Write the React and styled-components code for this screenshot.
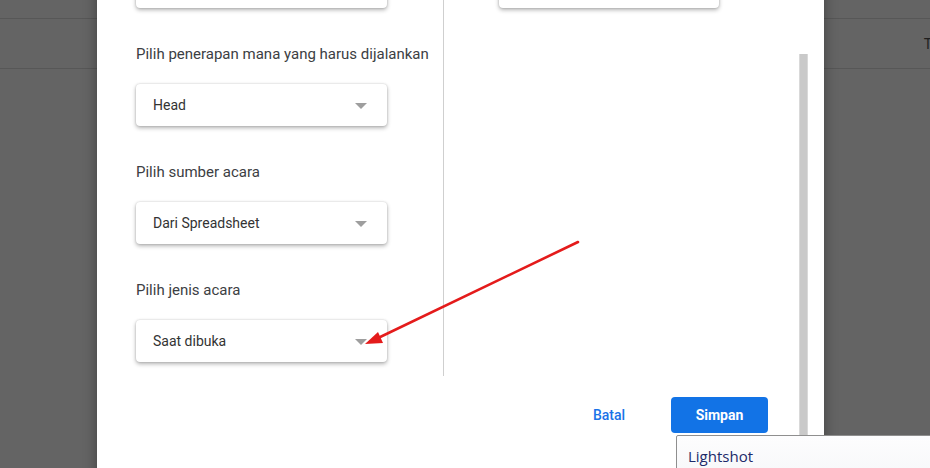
import React from "react";
import styled, { createGlobalStyle } from "styled-components";

const Global = createGlobalStyle`
  html, body {
    margin: 0;
    padding: 0;
    background: #646464;
    overflow: hidden;
  }
  #root {
    position: relative;
    width: 930px;
    height: 468px;
    overflow: hidden;
    font-family: Roboto, "Noto Sans", Arial, sans-serif;
  }
`;

const TopStrip = styled.div`
  height: 18px;
  border-bottom: 1px solid #575757;
`;

const Toolbar = styled.div`
  height: 49px;
  border-bottom: 1px solid #575757;
  display: flex;
  align-items: center;
  justify-content: flex-end;
  overflow: hidden;
`;

const ToolbarText = styled.span`
  font-size: 14px;
  color: #1e1e1e;
  margin-right: -2px;
  white-space: nowrap;
`;

const Modal = styled.div`
  position: absolute;
  left: 97px;
  top: -60px;
  width: 727px;
  height: 545px;
  background: #fff;
  border-radius: 8px;
  box-shadow: 0 0 14px rgba(0, 0, 0, 0.35);
  display: flex;
`;

const Main = styled.div`
  flex: 1;
  display: flex;
  flex-direction: column;
`;

const Body = styled.div`
  display: flex;
  padding-left: 39px;
`;

const Column = styled.div`
  display: flex;
  flex-direction: column;
  width: ${(p) => p.$width}px;
  padding-top: 26px;
  padding-left: ${(p) => p.$inset || 0}px;
  padding-bottom: 14px;
`;

const Divider = styled.div`
  width: 1px;
  background: #cfcfcf;
`;

const Field = styled.div`
  display: flex;
  flex-direction: column;
  margin-top: 36px;
`;

const Label = styled.div`
  font-size: 15px;
  line-height: 20px;
  color: #3c4043;
  margin-bottom: 20px;
  white-space: nowrap;
`;

const SelectBox = styled.div`
  box-sizing: border-box;
  width: ${(p) => p.$width}px;
  height: 42px;
  padding: 0 20px 0 17px;
  display: flex;
  align-items: center;
  justify-content: space-between;
  background: #fff;
  border-radius: 4px;
  box-shadow: 0 2px 4px rgba(0, 0, 0, 0.3), 0 0 2px rgba(0, 0, 0, 0.18);
  font-size: 14px;
  color: #333;
`;

const Caret = styled.span`
  width: 0;
  height: 0;
  border-left: 6px solid transparent;
  border-right: 6px solid transparent;
  border-top: 6px solid #9e9e9e;
  margin-top: 2px;
`;

const Footer = styled.div`
  display: flex;
  justify-content: flex-end;
  align-items: center;
  gap: 28px;
  padding-top: 21px;
  padding-right: 31px;
`;

const TextButton = styled.button`
  width: 68px;
  height: 36px;
  border: none;
  background: none;
  font-family: Roboto, Arial, sans-serif;
  font-weight: 500;
  font-size: 14px;
  color: #1a73e8;
  padding: 0;
`;

const PrimaryButton = styled.button`
  width: 97px;
  height: 36px;
  border: none;
  border-radius: 4px;
  background: #1273e6;
  color: #fff;
  font-family: Roboto, Arial, sans-serif;
  font-weight: 700;
  font-size: 14px;
  padding: 0;
`;

const ScrollThumb = styled.div`
  box-sizing: border-box;
  width: 9px;
  margin: 114px 16px 0 0;
  background: #c9c9c9;
  border-left: 1px solid #d9d9d9;
  border-right: 1px solid #d9d9d9;
`;

const Popup = styled.div`
  position: absolute;
  left: 676px;
  top: 435px;
  width: 300px;
  height: 60px;
  box-sizing: border-box;
  border: 1px solid #8f8f8f;
  border-radius: 2px;
  background: linear-gradient(#fdfdfe, #f4f5f7);
  padding: 10px 11px;
  font-family: "Open Sans", "Noto Sans", sans-serif;
  font-size: 15px;
  line-height: 20px;
  color: #1c2a6a;
`;

const Overlay = styled.svg`
  position: absolute;
  left: 0;
  top: 0;
  pointer-events: none;
`;

const Select = ({ value, width }) => (
  <SelectBox $width={width}>
    <span>{value}</span>
    {value !== undefined && <Caret />}
  </SelectBox>
);

const fields = [
  { label: "Pilih penerapan mana yang harus dijalankan", value: "Head" },
  { label: "Pilih sumber acara", value: "Dari Spreadsheet" },
  { label: "Pilih jenis acara", value: "Saat dibuka" },
];

export default function App() {
  return (
    <>
      <Global />
      <TopStrip />
      <Toolbar>
        <ToolbarText>T</ToolbarText>
      </Toolbar>
      <Modal>
        <Main>
          <Body>
            <Column $width={307}>
              <SelectBox $width={251} />
              {fields.map((f) => (
                <Field key={f.label}>
                  <Label>{f.label}</Label>
                  <Select value={f.value} width={251} />
                </Field>
              ))}
            </Column>
            <Divider />
            <Column $width={300} $inset={55}>
              <SelectBox $width={220} />
            </Column>
          </Body>
          <Footer>
            <TextButton>Batal</TextButton>
            <PrimaryButton>Simpan</PrimaryButton>
          </Footer>
        </Main>
        <ScrollThumb />
      </Modal>
      <Popup>Lightshot</Popup>
      <Overlay width="930" height="468" viewBox="0 0 930 468">
        <line x1="578" y1="242" x2="376" y2="339" stroke="#e41b1b" strokeWidth="2.6" strokeLinecap="round" />
        <polygon points="365,344 378,332 383,343" fill="#e41b1b" />
      </Overlay>
    </>
  );
}
